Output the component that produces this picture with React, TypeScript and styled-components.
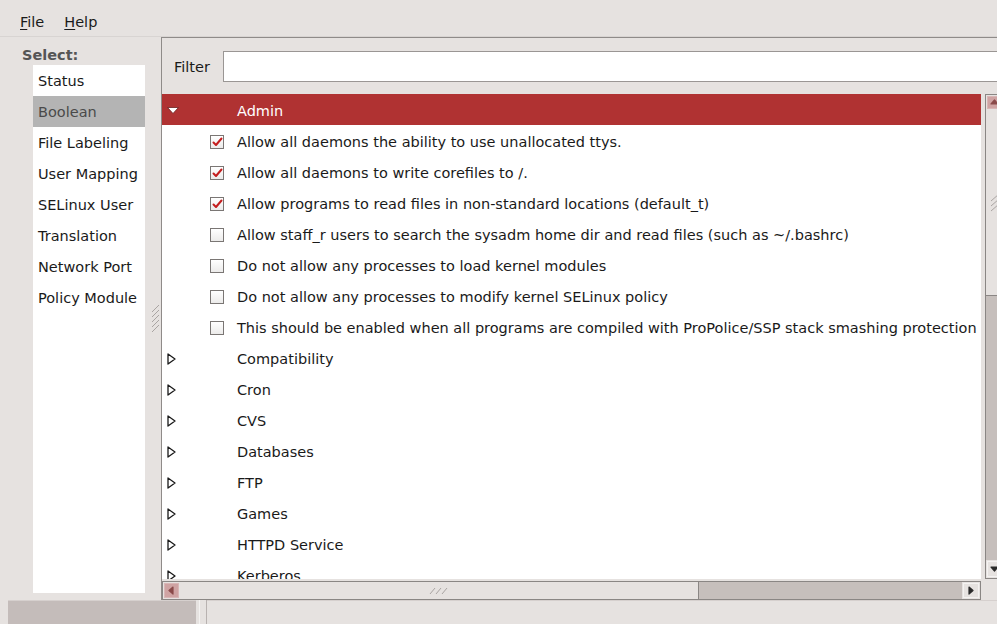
import React from 'react';
import styled, { createGlobalStyle } from 'styled-components';

const GlobalStyle = createGlobalStyle`
  html, body {
    margin: 0;
    padding: 0;
    background: #e6e2e0;
  }
  body {
    font-family: "DejaVu Sans", "Liberation Sans", sans-serif;
    font-size: 14.5px;
    color: #1a1a1a;
  }
`;

const Window = styled.div`
  width: 997px;
  height: 624px;
  overflow: hidden;
  display: flex;
  flex-direction: column;
  background: #e6e2e0;
`;

const MenuBar = styled.div`
  flex: none;
  height: 37px;
  box-sizing: border-box;
  display: flex;
  align-items: center;
  gap: 20px;
  padding: 8px 0 0 20px;
  border-bottom: 1px solid #d8d4d2;
`;

const MenuItem = styled.span`
  color: #1a1a1a;
  u {
    text-decoration: underline;
    text-underline-offset: 2px;
  }
`;

const Main = styled.div`
  flex: 1;
  display: flex;
  min-height: 0;
`;

const SidePane = styled.div`
  flex: none;
  width: 150px;
  display: flex;
  flex-direction: column;
  padding: 9px 0 7px 22px;
  box-sizing: border-box;
`;

const SideLabel = styled.div`
  font-weight: bold;
  color: #555;
  height: 19px;
  line-height: 19px;
`;

const SideList = styled.div`
  flex: 1;
  margin-left: 11px;
  width: 112px;
  background: #fff;
`;

const SideItem = styled.div<{ $active?: boolean }>`
  height: 31px;
  line-height: 33px;
  padding-left: 5px;
  white-space: nowrap;
  background: ${p => (p.$active ? '#b4b4b4' : 'transparent')};
  color: ${p => (p.$active ? '#4a4a4a' : '#1a1a1a')};
`;

const PaneHandle = styled.div`
  flex: none;
  width: 11px;
  display: flex;
  align-items: center;
  justify-content: center;
`;

const Frame = styled.div`
  flex: none;
  width: 841px;
  display: flex;
  flex-direction: column;
  border-left: 1px solid #8f8b89;
  border-top: 1px solid #8f8b89;
`;

const FilterRow = styled.div`
  flex: none;
  display: flex;
  align-items: center;
  gap: 13px;
  padding: 13px 0 12px 12px;
`;

const FilterEntry = styled.div`
  flex: 1;
  height: 31px;
  box-sizing: border-box;
  background: #fff;
  border: 1px solid #9a9694;
  border-right: none;
`;

const TreeBox = styled.div`
  flex: 1;
  display: grid;
  grid-template-columns: 819px 22px;
  grid-template-rows: 485px 21px;
  min-height: 0;
`;

const Viewport = styled.div`
  background: #fff;
  overflow: hidden;
`;

const Row = styled.div<{ $selected?: boolean }>`
  height: 31px;
  box-sizing: border-box;
  display: flex;
  align-items: center;
  padding: 2px 0 0 5px;
  white-space: nowrap;
  background: ${p => (p.$selected ? '#b03232' : 'transparent')};
  color: ${p => (p.$selected ? '#fff' : '#1a1a1a')};
`;

const ExpanderCell = styled.span`
  flex: none;
  width: 43px;
  display: flex;
  align-items: center;
`;

const CheckCell = styled.span`
  flex: none;
  width: 27px;
  display: flex;
  align-items: center;
`;

const CheckBox = styled.span`
  width: 12px;
  height: 12px;
  border: 1px solid #7a7674;
  background: linear-gradient(#ffffff, #ecebea);
  display: flex;
  align-items: center;
  justify-content: center;
`;

const VScroll = styled.div`
  margin-left: 4px;
  display: flex;
  flex-direction: column;
  background: #c6bfbc;
  border: 1px solid #8a8684;
  border-right: none;
`;

const HScroll = styled.div`
  margin-top: 2px;
  display: flex;
  background: #c6bfbc;
  border: 1px solid #8a8684;
`;

const ScrollButton = styled.div<{ $hot?: boolean; $size: number; $vertical?: boolean }>`
  flex: none;
  ${p => (p.$vertical ? `height: ${p.$size}px;` : `width: ${p.$size}px;`)}
  display: flex;
  align-items: center;
  justify-content: center;
  background: ${p => (p.$hot ? '#cfa3a3' : '#e6e2e0')};
  box-sizing: border-box;
  border: 1px solid #e6e2e0;
  box-shadow: inset 0 0 0 1px ${p => (p.$hot ? '#d8b6b6' : '#f4f2f1')};
`;

const Thumb = styled.div<{ $size: number; $vertical?: boolean }>`
  flex: none;
  ${p => (p.$vertical ? `height: ${p.$size}px;` : `width: ${p.$size}px;`)}
  display: flex;
  align-items: center;
  justify-content: center;
  background: #e6e2e0;
  box-sizing: border-box;
  ${p =>
    p.$vertical
      ? 'border-bottom: 1px solid #8a8684;'
      : 'border-right: 1px solid #8a8684;'}
`;

const Trough = styled.div`
  flex: 1;
`;

const Corner = styled.div`
  background: #e6e2e0;
`;

const StatusBar = styled.div`
  flex: none;
  height: 24px;
  display: flex;
  padding-left: 8px;
`;

const StatusCell = styled.div`
  width: 188px;
  background: #c4bcba;
  border-top: 1px solid #d6d0ce;
`;

const StatusGrip = styled.div`
  width: 6px;
  margin-left: 3px;
  border-left: 1px solid #f4f2f1;
  border-right: 1px solid #b8b2b0;
`;

const StatusRest = styled.div`
  flex: 1;
  border-top: 1px solid #d6d0ce;
`;

const Grip = ({ vertical }: { vertical?: boolean }) =>
  vertical ? (
    <svg width="9" height="30" viewBox="0 0 9 30">
      {[0, 5, 10, 15, 20].map(y => (
        <line key={y} x1="1" y1={y + 8} x2="8" y2={y + 1} stroke="#a9a4a2" strokeWidth="1" />
      ))}
    </svg>
  ) : (
    <svg width="20" height="9" viewBox="0 0 20 9">
      {[0, 6, 12].map(x => (
        <line key={x} x1={x + 1} y1="8" x2={x + 7} y2="1" stroke="#a9a4a2" strokeWidth="1" />
      ))}
    </svg>
  );

const ScrollGrip = ({ vertical }: { vertical?: boolean }) =>
  vertical ? (
    <svg width="10" height="18" viewBox="0 0 10 18">
      {[0, 5, 10].map(y => (
        <line key={y} x1="1" y1={y + 7} x2="9" y2={y} stroke="#a9a4a2" strokeWidth="1" />
      ))}
    </svg>
  ) : (
    <svg width="20" height="8" viewBox="0 0 20 8">
      {[0, 6, 12].map(x => (
        <line key={x} x1={x + 1} y1="7" x2={x + 6} y2="1" stroke="#a9a4a2" strokeWidth="1" />
      ))}
    </svg>
  );

const Arrow = ({ dir, color = '#2a2a2a' }: { dir: 'up' | 'down' | 'left' | 'right'; color?: string }) => {
  const pts = {
    up: '1,6 4.5,2 8,6',
    down: '1,2 4.5,6 8,2',
    left: '6,1 2,4.5 6,8',
    right: '2,1 6,4.5 2,8'
  }[dir];
  return (
    <svg width="9" height="9" viewBox="0 0 9 9">
      <polygon points={pts} fill={color} stroke={color} strokeWidth="1.2" strokeLinejoin="round" />
    </svg>
  );
};

const Expander = ({ open }: { open?: boolean }) =>
  open ? (
    <svg width="12" height="8" viewBox="0 0 12 8">
      <polygon points="0.5,0.5 11.5,0.5 6,6.5" fill="#fff" stroke="#6a2020" strokeWidth="0.8" />
    </svg>
  ) : (
    <svg width="9" height="12" viewBox="0 0 9 12">
      <polygon points="1,1 8,6 1,11" fill="#fff" stroke="#1a1a1a" strokeWidth="1.3" strokeLinejoin="round" />
    </svg>
  );

const Check = () => (
  <svg width="11" height="10" viewBox="0 0 11 10">
    <polyline points="1.5,5.5 4,8 9.5,1.5" fill="none" stroke="#c41e1e" strokeWidth="2" strokeLinecap="round" strokeLinejoin="round" />
  </svg>
);

const sections = ['Status', 'Boolean', 'File Labeling', 'User Mapping', 'SELinux User', 'Translation', 'Network Port', 'Policy Module'];

const adminBooleans = [
  { label: 'Allow all daemons the ability to use unallocated ttys.', on: true },
  { label: 'Allow all daemons to write corefiles to /.', on: true },
  { label: 'Allow programs to read files in non-standard locations (default_t)', on: true },
  { label: 'Allow staff_r users to search the sysadm home dir and read files (such as ~/.bashrc)', on: false },
  { label: 'Do not allow any processes to load kernel modules', on: false },
  { label: 'Do not allow any processes to modify kernel SELinux policy', on: false },
  { label: 'This should be enabled when all programs are compiled with ProPolice/SSP stack smashing protection', on: false }
];

const groups = ['Compatibility', 'Cron', 'CVS', 'Databases', 'FTP', 'Games', 'HTTPD Service', 'Kerberos'];

export default function App() {
  return (
    <Window>
      <GlobalStyle />
      <MenuBar>
        <MenuItem><u>F</u>ile</MenuItem>
        <MenuItem><u>H</u>elp</MenuItem>
      </MenuBar>
      <Main>
        <SidePane>
          <SideLabel>Select:</SideLabel>
          <SideList>
            {sections.map(s => (
              <SideItem key={s} $active={s === 'Boolean'}>{s}</SideItem>
            ))}
          </SideList>
        </SidePane>
        <PaneHandle>
          <Grip vertical />
        </PaneHandle>
        <Frame>
          <FilterRow>
            <span>Filter</span>
            <FilterEntry />
          </FilterRow>
          <TreeBox>
            <Viewport>
              <Row $selected>
                <ExpanderCell><Expander open /></ExpanderCell>
                <CheckCell />
                <span>Admin</span>
              </Row>
              {adminBooleans.map(b => (
                <Row key={b.label}>
                  <ExpanderCell />
                  <CheckCell>
                    <CheckBox>{b.on && <Check />}</CheckBox>
                  </CheckCell>
                  <span>{b.label}</span>
                </Row>
              ))}
              {groups.map(g => (
                <Row key={g}>
                  <ExpanderCell><Expander /></ExpanderCell>
                  <CheckCell />
                  <span>{g}</span>
                </Row>
              ))}
            </Viewport>
            <VScroll>
              <ScrollButton $vertical $hot $size={15}><Arrow dir="up" color="#8a4a4a" /></ScrollButton>
              <Thumb $vertical $size={186}><ScrollGrip vertical /></Thumb>
              <Trough />
              <ScrollButton $vertical $size={18}><Arrow dir="down" /></ScrollButton>
            </VScroll>
            <HScroll>
              <ScrollButton $hot $size={17}><Arrow dir="left" color="#8a4a4a" /></ScrollButton>
              <Thumb $size={519}><ScrollGrip /></Thumb>
              <Trough />
              <ScrollButton $size={18}><Arrow dir="right" /></ScrollButton>
            </HScroll>
            <Corner />
          </TreeBox>
        </Frame>
      </Main>
      <StatusBar>
        <StatusCell />
        <StatusGrip />
        <StatusRest />
      </StatusBar>
    </Window>
  );
}
